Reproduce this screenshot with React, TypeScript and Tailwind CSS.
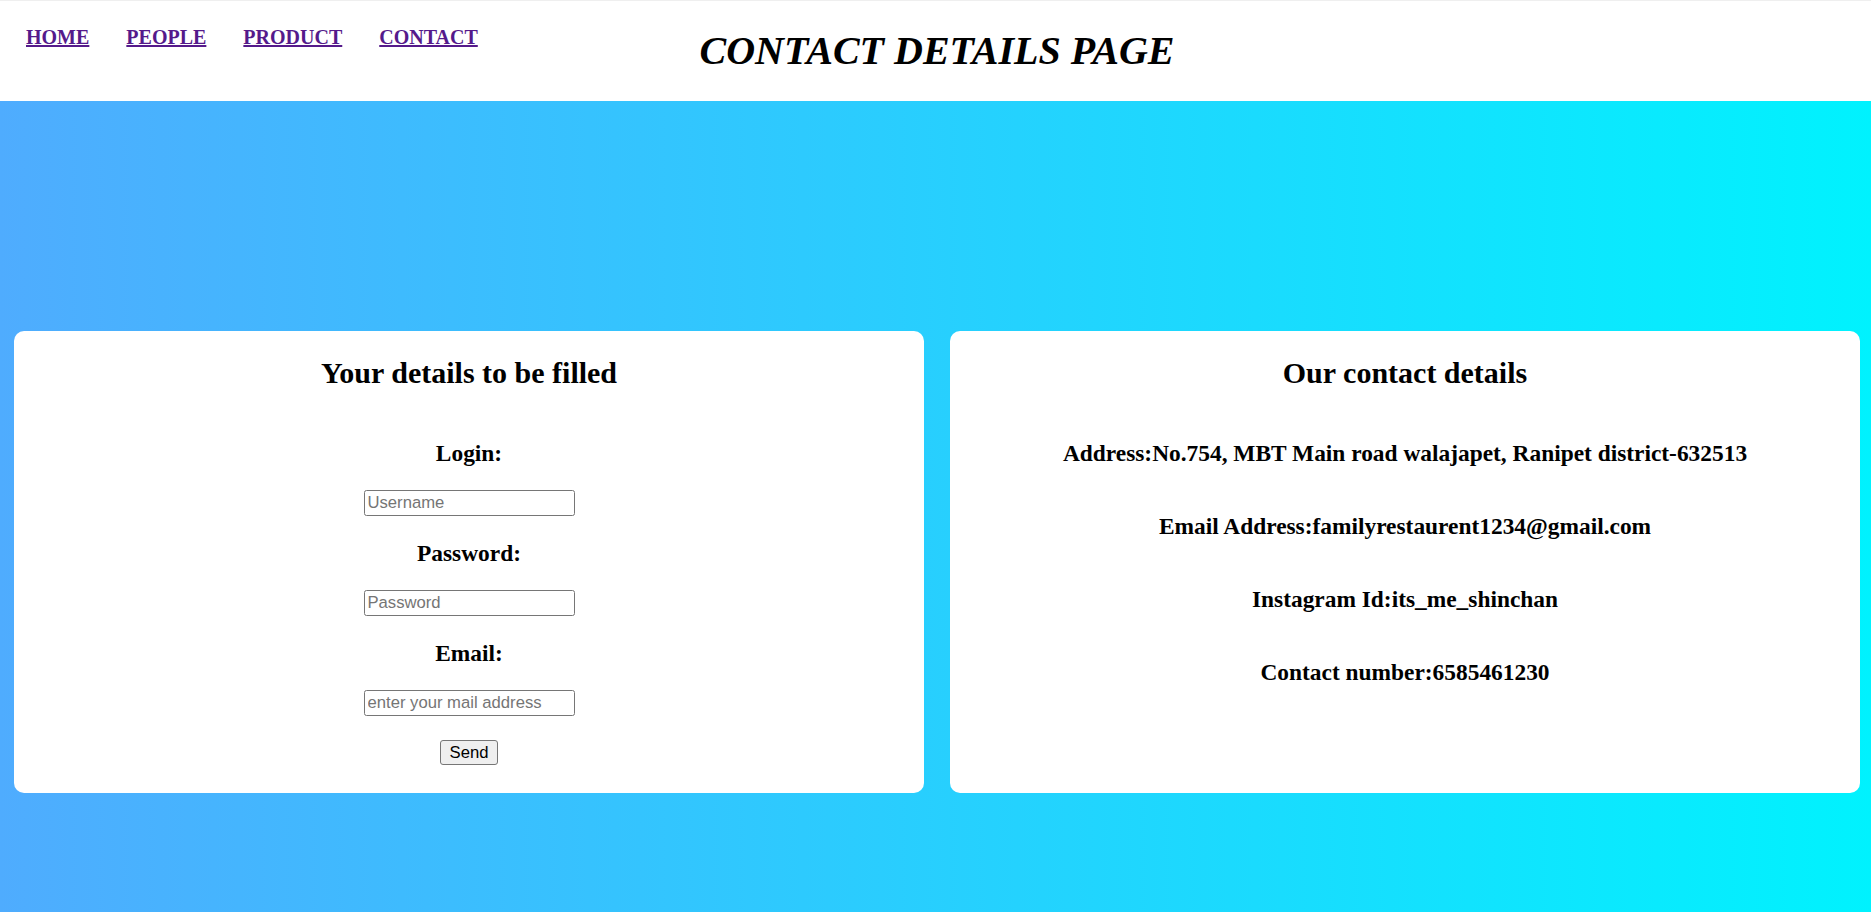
const navLinks = ['HOME', 'PEOPLE', 'PRODUCT', 'CONTACT'];

const formFields = [
  { label: 'Login:', placeholder: 'Username', type: 'text' },
  { label: 'Password:', placeholder: 'Password', type: 'password' },
  { label: 'Email:', placeholder: 'enter your mail address', type: 'email' },
];

const contactLines = [
  'Address:No.754, MBT Main road walajapet, Ranipet district-632513',
  'Email Address:familyrestaurent1234@gmail.com',
  'Instagram Id:its_me_shinchan',
  'Contact number:6585461230',
];

export default function App() {
  return (
    <div className="min-h-screen bg-white text-black font-['Liberation_Serif','Times_New_Roman',serif]">
      <header className="h-[101px] border-t border-[#efefef] grid grid-cols-[1fr_auto_1fr] items-start">
        <nav className="flex gap-[37px] pl-[26px] pt-[24.5px]">
          {navLinks.map((link) => (
            <a
              key={link}
              href="#"
              className="text-[20px] leading-[22px] font-bold underline text-[#551a8b]"
            >
              {link}
            </a>
          ))}
        </nav>
        <h1 className="pt-[27.5px] pl-[3px] text-[40px] leading-[44px] font-bold italic whitespace-nowrap">
          CONTACT DETAILS PAGE
        </h1>
        <div />
      </header>

      <main className="min-h-[811px] bg-linear-to-r/srgb from-[#4facfe] to-[#00f2fe] pt-[230px] pl-[14px] pr-[11px]">
        <div className="flex gap-[26px]">
          <section className="flex-1 bg-white rounded-[10px] pt-[25px] pb-[28px] flex flex-col items-center">
            <h2 className="text-[30px] leading-[33px] font-bold mb-[51px]">Your details to be filled</h2>
            <form className="flex flex-col items-center gap-6" onSubmit={(e) => e.preventDefault()}>
              {formFields.map((f) => (
                <div key={f.label} className="contents">
                  <h3 className="text-[23.4px] leading-[26px] font-bold">{f.label}</h3>
                  <input
                    type={f.type}
                    placeholder={f.placeholder}
                    className="w-[211px] h-[26px] border border-[#767676] rounded-[2.5px] px-[3px] bg-white font-['Liberation_Sans',Arial,sans-serif] text-[16.67px] text-black placeholder:text-[#757575]"
                  />
                </div>
              ))}
              <button
                type="submit"
                className="w-[58px] h-[25px] border border-[#767676] rounded-[3px] bg-[#efefef] font-['Liberation_Sans',Arial,sans-serif] text-[16.67px] leading-[20px] text-black"
              >
                Send
              </button>
            </form>
          </section>

          <section className="flex-1 bg-white rounded-[10px] pt-[25px] pb-[28px] flex flex-col items-center">
            <h2 className="text-[30px] leading-[33px] font-bold mb-[51px]">Our contact details</h2>
            <div className="flex flex-col items-center gap-[47px]">
              {contactLines.map((line) => (
                <h3 key={line} className="text-[23.4px] leading-[26px] font-bold text-center">
                  {line}
                </h3>
              ))}
            </div>
          </section>
        </div>
      </main>
    </div>
  );
}
